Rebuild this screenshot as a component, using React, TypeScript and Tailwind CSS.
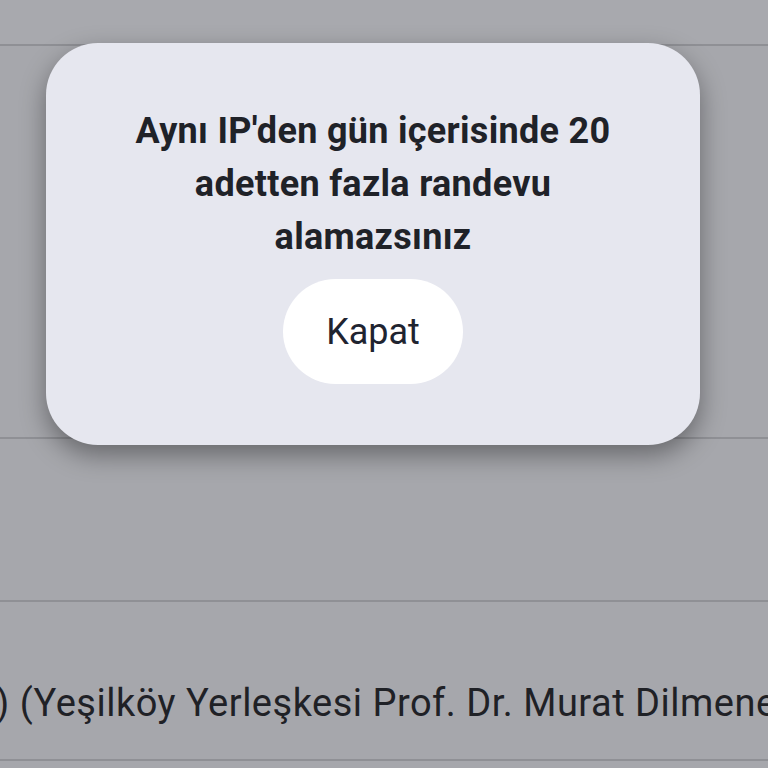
export default function App() {
  return (
    <div
      className="relative w-[768px] h-[768px] overflow-hidden bg-[#a6a7ac]"
      style={{ fontFamily: "Roboto, 'Noto Sans', Arial, sans-serif" }}
    >
      {/* page rows behind the overlay */}
      <div className="flex flex-col">
        <div className="h-[44px] bg-[#a8a9ae]" />
        <div className="h-[2px] bg-[#8f9095]" />
        <div className="h-[391px]" />
        <div className="h-[2px] bg-[#8f9095]" />
        <div className="h-[161px]" />
        <div className="h-[2px] bg-[#8f9095]" />
        <div className="h-[157px] flex items-center pt-[44px]">
          <span className="whitespace-nowrap text-[38px] tracking-[0.5px] leading-none text-[#1f2126] ml-[-4px]">
            ) (Yeşilköy Yerleşkesi Prof. Dr. Murat Dilmener
          </span>
        </div>
        <div className="h-[2px] bg-[#8f9095]" />
      </div>

      {/* alert dialog */}
      <div className="absolute left-[46px] top-[43px] w-[654px] h-[402px] rounded-[52px] bg-[#e6e7ef] shadow-[0_10px_26px_rgba(0,0,0,0.38)] flex flex-col items-center pt-[62px]">
        <p className="whitespace-nowrap text-center font-bold text-[36px] tracking-[0.3px] leading-[53px] text-[#1f2228]">
          Aynı IP'den gün içerisinde 20
          <br />
          adetten fazla randevu
          <br />
          alamazsınız
        </p>
        <button className="mt-[15px] w-[180px] h-[105px] rounded-full bg-white text-[36px] text-[#1f2430]">
          Kapat
        </button>
      </div>
    </div>
  );
}
